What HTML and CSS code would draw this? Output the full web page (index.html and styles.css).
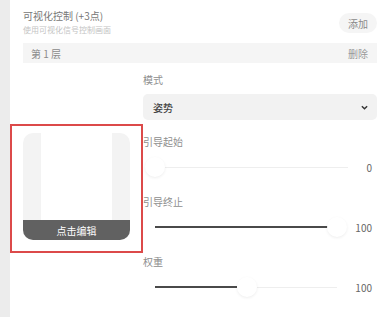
FILE: index.html
```html
<!DOCTYPE html>
<html lang="zh-CN">
<head>
  <meta charset="UTF-8">
  <meta name="viewport" content="width=device-width,initial-scale=1.0">
  <title>可视化控制</title>
  <link rel="stylesheet" href="styles.css">
</head>
<body>
  <div class="page">
    <aside class="rail"></aside>

    <main class="panel">
      <!-- section header -->
      <header class="section-head">
        <div class="head-text">
          <div class="title">可视化控制 (+3点)</div>
          <div class="desc">使用可视化信号控制画面</div>
        </div>
        <button class="btn-add">添加</button>
      </header>

      <!-- layer 1 -->
      <div class="layer-bar">
        <span>第 1 层</span>
        <span class="layer-del">删除</span>
      </div>

      <div class="layer-body">
        <div class="preview-col">
          <div class="highlight">
            <div class="preview">
              <div class="preview-canvas"></div>
              <div class="preview-edit">点击编辑</div>
            </div>
          </div>
        </div>

        <div class="fields">
          <div class="field field-select">
            <div class="label">模式</div>
            <div class="select">
              <span>姿势</span>
              <svg class="chevron" viewBox="0 0 8 5"><polyline points="1,1 4,4 7,1"/></svg>
            </div>
          </div>

          <div class="field">
            <div class="label">引导起始</div>
            <div class="slider-row">
              <div class="track">
                <div class="fill" style="width:0%"></div>
                <div class="thumb" style="left:0%"></div>
              </div>
              <span class="value">0</span>
            </div>
          </div>

          <div class="field">
            <div class="label">引导终止</div>
            <div class="slider-row">
              <div class="track">
                <div class="fill" style="width:100%"></div>
                <div class="thumb" style="left:100%"></div>
              </div>
              <span class="value">100</span>
            </div>
          </div>

          <div class="field">
            <div class="label">权重</div>
            <div class="slider-row">
              <div class="track">
                <div class="fill" style="width:45%"></div>
                <div class="thumb" style="left:50.5%"></div>
              </div>
              <span class="value">100</span>
            </div>
          </div>
        </div>
      </div>
    </main>
  </div>
</body>
</html>
```

FILE: styles.css
```css
* { margin:0; padding:0; box-sizing:border-box; }
body {
  background:#fff;
  font-family:"Noto Sans CJK SC", "Noto Sans", sans-serif;
  color:#666;
  height:100vh; overflow:hidden;
}
.page { display:flex; height:100%; }

/* left rail */
.rail { width:10px; flex:none; background:#ececec; }

/* main panel */
.panel {
  flex:1;
  padding:9px 12px 0 13px;
}

/* header */
.section-head {
  display:flex; align-items:center; justify-content:space-between;
}
.title { font-size:10px; line-height:14px; color:#777; }
.desc  { font-size:8px; line-height:12px; color:#c4c4c4; margin-top:1px; }
.btn-add {
  width:38px; height:20px;
  border:none; border-radius:10px;
  background:#f5f5f5; color:#8a8a8a;
  font-family:inherit; font-size:10px;
  margin-top:1px;
}

/* layer bar */
.layer-bar {
  margin-top:7px;
  height:20px;
  background:#f5f5f5;
  display:flex; align-items:center; justify-content:space-between;
  padding:0 9px 0 8px;
  font-size:10px; color:#8a8a8a;
}
.layer-del { color:#999; }

/* layer body */
.layer-body {
  display:flex;
  margin-left:-13px;
}
.preview-col { width:132px; flex:none; }
.highlight {
  margin-top:61px;
  width:133px; height:129px;
  border:2px solid #dc4a4a;
  padding:7px 11px 11px;
  position:relative; z-index:2;
}
.preview {
  height:107px;
  background:#f3f3f3;
  border-radius:10px;
  overflow:hidden;
  display:flex; flex-direction:column;
}
.preview-canvas { flex:1; margin:0 18px; background:#fff; }
.preview-edit {
  height:20px;
  background:#616161; color:#fff;
  font-size:10px;
  display:flex; align-items:center; justify-content:center;
}

/* fields */
.fields {
  flex:1;
  padding:10px 5px 0 0;
  display:flex; flex-direction:column; gap:18px;
}
.field { display:flex; flex-direction:column; gap:8px; }
.field-select { margin-bottom:-3px; }
.label { font-size:10px; line-height:14px; color:#8e8e8e; padding-left:1px; }

.select {
  height:26px;
  margin:-1px -5px 0 1px;
  background:#f2f2f2;
  border-radius:5px;
  display:flex; align-items:center; justify-content:space-between;
  padding:0 9px 0 10px;
  font-size:10px; font-weight:500; color:#444;
}
.chevron {
  width:7px; height:5px;
  fill:none; stroke:#333; stroke-width:1.6;
}

.slider-row {
  height:20px;
  display:flex; align-items:center; gap:18px;
  padding-left:13px;
}
.track {
  flex:1; height:1px;
  background:#eeeeee;
  position:relative;
}
.fill {
  position:absolute; left:0; top:-1px;
  height:2px; background:#4a4a4a;
}
.thumb {
  position:absolute; top:50%;
  width:20px; height:20px;
  border-radius:50%;
  background:#fff;
  box-shadow:0 1px 3px rgba(0,0,0,0.07);
  transform:translate(-50%,-50%);
}
.value { font-size:10px; color:#666; text-align:right; }
```
